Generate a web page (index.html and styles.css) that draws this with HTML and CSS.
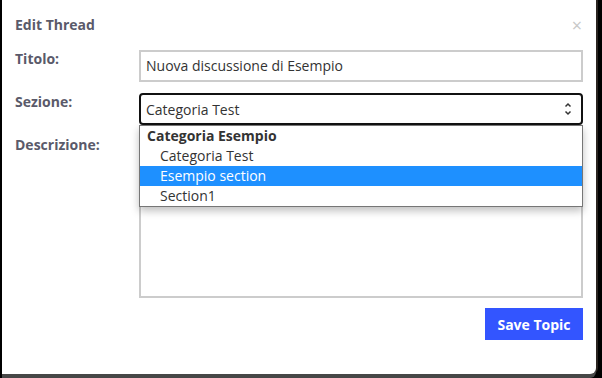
FILE: index.html
```html
<!DOCTYPE html>
<html>
<head>
<meta charset="utf-8">
<link rel="stylesheet" href="styles.css">
</head>
<body>
<div class="frame">
  <div class="modal">
    <div class="header">
      <span class="title">Edit Thread</span>
      <span class="close">×</span>
    </div>
    <div class="form">
      <div class="label">Titolo:</div>
      <div class="field input">Nuova discussione di Esempio</div>
      <div class="label">Sezione:</div>
      <div class="select-wrap">
        <div class="field select">
          <span>Categoria Test</span>
          <svg class="arrows" width="8" height="14" viewBox="0 0 8 14"><path d="M1.5 4.5 L4 2 L6.5 4.5 M1.5 9.5 L4 12 L6.5 9.5" fill="none" stroke="#333" stroke-width="1.5"/></svg>
        </div>
        <div class="dropdown">
          <div class="group">Categoria Esempio</div>
          <div class="option">Categoria Test</div>
          <div class="option selected">Esempio section</div>
          <div class="option">Section1</div>
        </div>
      </div>
      <div class="label">Descrizione:</div>
      <div class="field textarea"></div>
      <div></div>
      <div class="actions"><button class="save">Save Topic</button></div>
    </div>
  </div>
</div>
</body>
</html>
```
FILE: styles.css
```css
html, body {
  margin: 0;
  padding: 0;
  background: #000;
  font-family: "Open Sans", "Liberation Sans", sans-serif;
  font-size: 14px;
}
.frame {
  width: 602px;
  height: 378px;
  background: #000;
  overflow: hidden;
}
.modal {
  margin-left: 2px;
  width: 594px;
  height: 374px;
  background: #fff;
  border-bottom-right-radius: 6px;
  box-shadow: 0 4px 0 #474747, 2px 0 0 #2a2420;
  padding: 0 13px 0 13px;
  box-sizing: border-box;
}
.header {
  display: flex;
  justify-content: space-between;
  align-items: center;
  height: 50px;
  padding-bottom: 1px;
  box-sizing: border-box;
}
.title {
  font-weight: bold;
  color: #5a5a6a;
  font-size: 14px;
}
.close {
  color: #c8c8c8;
  font-size: 18px;
  margin-right: 1px;
}
.form {
  display: grid;
  grid-template-columns: 124px 1fr;
  row-gap: 11px;
}
.label {
  font-weight: bold;
  color: #5a5a6a;
  line-height: 20px;
  margin-top: -1px;
}
.field {
  box-sizing: border-box;
  color: #333;
}
.input {
  height: 32px;
  border: 2px solid #cccccc;
  padding: 0 5px;
  line-height: 28px;
}
.select-wrap {
  position: relative;
}
.select {
  height: 32px;
  border: 2px solid #111;
  border-radius: 4px;
  padding: 0 5px;
  display: flex;
  align-items: center;
  justify-content: space-between;
}
.arrows {
  margin-right: 4px;
}
.dropdown {
  position: absolute;
  left: 0;
  right: 0;
  top: 32px;
  background: #fff;
  border: 1px solid #767676;
  box-shadow: 0 4px 8px rgba(0,0,0,0.25);
  z-index: 2;
  color: #333;
  line-height: 20px;
}
.group {
  font-weight: bold;
  padding-left: 7px;
}
.option {
  padding-left: 20px;
}
.option.selected {
  background: #1e90ff;
  color: #fff;
}
.textarea {
  height: 162px;
  border: 2px solid #cccccc;
}
.actions {
  display: flex;
  justify-content: flex-end;
}
.save {
  height: 32px;
  width: 98px;
  margin-top: -1px;
  background: #3355ff;
  color: #fff;
  border: none;
  font-family: "Open Sans", "Liberation Sans", sans-serif;
  font-weight: bold;
  font-size: 14px;
  padding: 0;
}
```
